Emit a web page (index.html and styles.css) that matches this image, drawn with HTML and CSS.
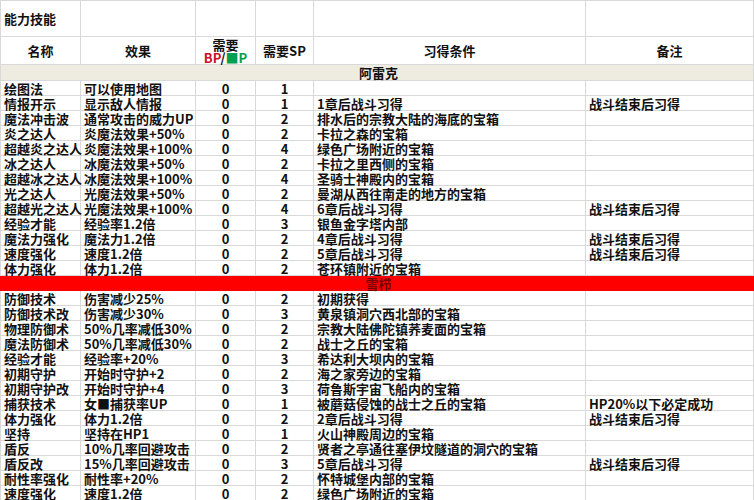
FILE: index.html
```html
<!DOCTYPE html>
<html lang="zh-CN">
<head>
<meta charset="utf-8">
<title>能力技能</title>
<link rel="stylesheet" href="styles.css">
</head>
<body>
<table class="sheet">
<colgroup>
<col class="c-name"><col class="c-eff"><col class="c-bp"><col class="c-sp"><col class="c-cond"><col class="c-note">
</colgroup>
<tbody>
<tr class="title-row"><td class="title">能力技能</td><td></td><td></td><td></td><td></td><td></td></tr>
<tr class="head-row">
<td class="h">名称</td><td class="h">效果</td>
<td class="h bp"><div>需要</div><div><span class="red">BP</span>/<span class="green">■P</span></div></td>
<td class="h">需要SP</td><td class="h">习得条件</td><td class="h">备注</td>
</tr>
<tr class="sec sec-tan"><td colspan="6">阿雷克</td></tr>
<tr><td>绘图法</td><td>可以使用地图</td><td class="n">0</td><td class="n">1</td><td></td><td></td></tr>
<tr><td>情报开示</td><td>显示敌人情报</td><td class="n">0</td><td class="n">1</td><td>1章后战斗习得</td><td>战斗结束后习得</td></tr>
<tr><td>魔法冲击波</td><td>通常攻击的威力UP</td><td class="n">0</td><td class="n">2</td><td>排水后的宗教大陆的海底的宝箱</td><td></td></tr>
<tr><td>炎之达人</td><td>炎魔法效果+50%</td><td class="n">0</td><td class="n">2</td><td>卡拉之森的宝箱</td><td></td></tr>
<tr><td>超越炎之达人</td><td>炎魔法效果+100%</td><td class="n">0</td><td class="n">4</td><td>绿色广场附近的宝箱</td><td></td></tr>
<tr><td>冰之达人</td><td>冰魔法效果+50%</td><td class="n">0</td><td class="n">2</td><td>卡拉之里西侧的宝箱</td><td></td></tr>
<tr><td>超越冰之达人</td><td>冰魔法效果+100%</td><td class="n">0</td><td class="n">4</td><td>圣骑士神殿内的宝箱</td><td></td></tr>
<tr><td>光之达人</td><td>光魔法效果+50%</td><td class="n">0</td><td class="n">2</td><td>曼湖从西往南走的地方的宝箱</td><td></td></tr>
<tr><td>超越光之达人</td><td>光魔法效果+100%</td><td class="n">0</td><td class="n">4</td><td>6章后战斗习得</td><td>战斗结束后习得</td></tr>
<tr><td>经验才能</td><td>经验率1.2倍</td><td class="n">0</td><td class="n">3</td><td>银鱼金字塔内部</td><td></td></tr>
<tr><td>魔法力强化</td><td>魔法力1.2倍</td><td class="n">0</td><td class="n">2</td><td>4章后战斗习得</td><td>战斗结束后习得</td></tr>
<tr><td>速度强化</td><td>速度1.2倍</td><td class="n">0</td><td class="n">2</td><td>5章后战斗习得</td><td>战斗结束后习得</td></tr>
<tr><td>体力强化</td><td>体力1.2倍</td><td class="n">0</td><td class="n">2</td><td>苍环镇附近的宝箱</td><td></td></tr>
<tr class="sec sec-red"><td colspan="6">雪栉</td></tr>
<tr><td>防御技术</td><td>伤害减少25%</td><td class="n">0</td><td class="n">2</td><td>初期获得</td><td></td></tr>
<tr><td>防御技术改</td><td>伤害减少30%</td><td class="n">0</td><td class="n">3</td><td>黄泉镇洞穴西北部的宝箱</td><td></td></tr>
<tr><td>物理防御术</td><td>50%几率减低30%</td><td class="n">0</td><td class="n">2</td><td>宗教大陆佛陀镇荞麦面的宝箱</td><td></td></tr>
<tr><td>魔法防御术</td><td>50%几率减低30%</td><td class="n">0</td><td class="n">2</td><td>战士之丘的宝箱</td><td></td></tr>
<tr><td>经验才能</td><td>经验率+20%</td><td class="n">0</td><td class="n">3</td><td>希达利大坝内的宝箱</td><td></td></tr>
<tr><td>初期守护</td><td>开始时守护+2</td><td class="n">0</td><td class="n">2</td><td>海之家旁边的宝箱</td><td></td></tr>
<tr><td>初期守护改</td><td>开始时守护+4</td><td class="n">0</td><td class="n">3</td><td>荷鲁斯宇宙飞船内的宝箱</td><td></td></tr>
<tr><td>捕获技术</td><td>女■捕获率UP</td><td class="n">0</td><td class="n">1</td><td>被蘑菇侵蚀的战士之丘的宝箱</td><td>HP20%以下必定成功</td></tr>
<tr><td>体力强化</td><td>体力1.2倍</td><td class="n">0</td><td class="n">2</td><td>2章后战斗习得</td><td>战斗结束后习得</td></tr>
<tr><td>坚持</td><td>坚持在HP1</td><td class="n">0</td><td class="n">1</td><td>火山神殿周边的宝箱</td><td></td></tr>
<tr><td>盾反</td><td>10%几率回避攻击</td><td class="n">0</td><td class="n">2</td><td>贤者之亭通往塞伊坟隧道的洞穴的宝箱</td><td></td></tr>
<tr><td>盾反改</td><td>15%几率回避攻击</td><td class="n">0</td><td class="n">3</td><td>5章后战斗习得</td><td>战斗结束后习得</td></tr>
<tr><td>耐性率强化</td><td>耐性率+20%</td><td class="n">0</td><td class="n">2</td><td>怀特城堡内部的宝箱</td><td></td></tr>
<tr><td>速度强化</td><td>速度1.2倍</td><td class="n">0</td><td class="n">2</td><td>绿色广场附近的宝箱</td><td></td></tr>
</tbody>
</table>
</body>
</html>
```

FILE: styles.css
```css
html, body {
  margin: 0;
  padding: 0;
  background: #ffffff;
}
body {
  font-family: "Noto Sans CJK SC", "Liberation Sans", sans-serif;
  font-size: 13px;
  color: #111111;
  overflow: hidden;
}
.sheet {
  border-collapse: collapse;
  table-layout: fixed;
  width: 753px;
}
.c-name { width: 80px; }
.c-eff { width: 115px; }
.c-bp { width: 60px; }
.c-sp { width: 58px; }
.c-cond { width: 272px; }
.c-note { width: 168px; }
.sheet td {
  border: 1px solid #d9d9d9;
  padding: 0 0 0 3px;
  height: 14px;
  line-height: 13px;
  white-space: nowrap;
  overflow: visible;
  vertical-align: middle;
  font-weight: 700;
}
.sheet td.n {
  text-align: center;
  padding: 0;
}
.title-row td {
  height: 35px;
}
.head-row td {
  height: 27px;
}
.sheet td.h {
  text-align: center;
  padding: 0;
}
.sheet td.bp {
  line-height: 13px;
}
.red { color: #c8102e; }
.green { color: #00a050; }
.sec td {
  text-align: center;
}
.sec-tan td {
  background: #eeece1;
  height: 15px;
}
.sec-red td {
  background: #ff0000;
  color: #7a0000;
  height: 14px;
  border-color: #ff0000;
}
```
